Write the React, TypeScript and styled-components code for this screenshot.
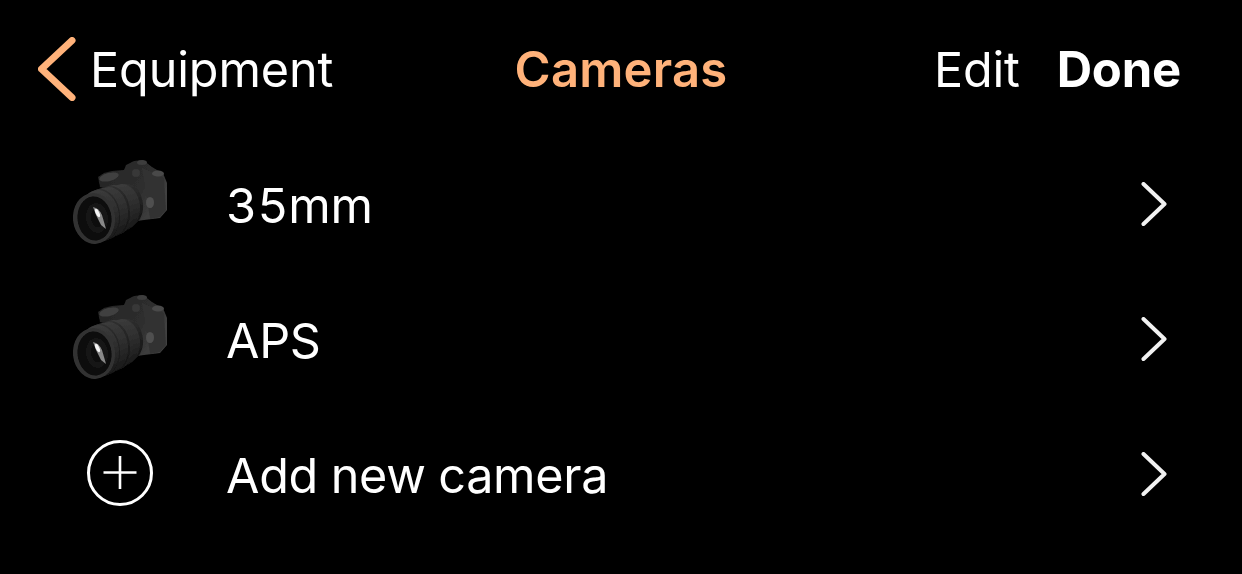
import styled, { createGlobalStyle } from "styled-components";

const GlobalStyle = createGlobalStyle`
  html, body {
    margin: 0;
    padding: 0;
    background: #000;
  }
`;

const accent = "#ffb27a";

const Screen = styled.div`
  width: 1242px;
  height: 574px;
  background: #000;
  color: #fff;
  font-family: Inter, "Liberation Sans", sans-serif;
  overflow: hidden;
`;

const NavBar = styled.header`
  height: 138px;
  display: grid;
  grid-template-columns: 1fr auto 1fr;
  align-items: center;
  padding: 0 38px;
`;

const BackLink = styled.div`
  display: flex;
  align-items: center;
  gap: 14px;
  font-size: 48.5px;
  letter-spacing: -0.1px;
`;

const Title = styled.div`
  color: ${accent};
  font-size: 49px;
  font-weight: 600;
  letter-spacing: 0.2px;
`;

const Actions = styled.div`
  display: flex;
  justify-content: flex-end;
  align-items: center;
  gap: 37px;
  padding-right: 23px;
`;

const Action = styled.span<{ $bold?: boolean }>`
  font-size: ${(p) => (p.$bold ? "49px" : "48.5px")};
  letter-spacing: -0.2px;
  font-weight: ${(p) => (p.$bold ? 700 : 400)};
`;

const List = styled.ul`
  list-style: none;
  margin: 0;
  padding: 0 75px 0 60px;
`;

const Row = styled.li`
  height: 135px;
  display: flex;
  align-items: center;
`;

const IconSlot = styled.div`
  width: 120px;
  height: 100px;
  flex: none;
  margin-bottom: 5px;
  display: flex;
  align-items: center;
  justify-content: center;
`;

const Label = styled.span`
  flex: 1;
  margin-left: 46px;
  font-size: 48.5px;
  letter-spacing: -0.3px;
  font-variant-numeric: tabular-nums;
`;

const Chevron = styled.svg`
  flex: none;
  margin-bottom: 4px;
`;

const BackChevron = () => (
  <svg width="38" height="64" viewBox="0 0 38 64" fill="none">
    <path d="M34 3.5 L3.5 32 L34 60.5" stroke={accent} strokeWidth="7" strokeLinecap="round" strokeLinejoin="round" />
  </svg>
);

const RowChevron = () => (
  <Chevron width="26" height="44" viewBox="0 0 26 44" fill="none">
    <path d="M2.5 2 L23.5 22 L2.5 42" stroke="#f2f2f2" strokeWidth="4" strokeLinecap="round" strokeLinejoin="round" />
  </Chevron>
);

const PlusCircle = () => (
  <svg width="68" height="68" viewBox="0 0 68 68" fill="none" stroke="#fff">
    <circle cx="34" cy="34" r="31.5" strokeWidth="3" />
    <path d="M34 17 V50 M17.5 33.5 H50.5" strokeWidth="2.6" />
  </svg>
);

// lens barrel drawn back to front: x, y, half width, half height, grey
const barrelBands: [number, number, number, number, string][] = [
  [68, 55, 15, 21, "url(#camBarrelDark)"],
  [63, 57, 17, 23, "url(#camBarrel)"],
  [55, 60, 18, 25, "url(#camBarrel)"],
  [52, 61, 18, 25, "url(#camBarrelDark)"],
  [50, 62, 18, 25, "url(#camBarrel)"],
  [44, 64, 19, 26, "url(#camBarrel)"],
  [41, 65, 19, 26, "url(#camBarrelDark)"],
  [39, 66, 20, 26, "url(#camBarrel)"],
];

const CameraIcon = () => (
  <svg width="120" height="100" viewBox="0 3 120 100">
    <defs>
      <linearGradient id="camBody" x1="0" y1="0" x2="1" y2="0.5">
        <stop offset="0" stopColor="#242424" />
        <stop offset="0.7" stopColor="#2e2e2e" />
        <stop offset="1" stopColor="#414141" />
      </linearGradient>
      <linearGradient id="camBarrel" x1="0.4" y1="0" x2="0.5" y2="1">
        <stop offset="0" stopColor="#3c3c3c" />
        <stop offset="0.55" stopColor="#2b2b2b" />
        <stop offset="1" stopColor="#181818" />
      </linearGradient>
      <linearGradient id="camBarrelDark" x1="0.4" y1="0" x2="0.5" y2="1">
        <stop offset="0" stopColor="#303030" />
        <stop offset="1" stopColor="#131313" />
      </linearGradient>
      <filter id="camSoft" x="-5%" y="-5%" width="110%" height="110%">
        <feGaussianBlur stdDeviation="0.7" />
      </filter>
    </defs>
    <g filter="url(#camSoft)">
      <path
        d="M38 27 L44 23 L52 21 L64 20 L66 15 L74 11 L83 10 L92 17 L97 20 L103 23 L107 33 L107 60 L100 68 L84 70 L70 72 L50 40 L40 37 Z"
        fill="url(#camBody)"
      />
      <path d="M82 18 L104 28 L106 60 L100 67 L90 69 L86 40 Z" fill="#333" />
      <ellipse cx="49" cy="27" rx="10" ry="4" fill="#414141" transform="rotate(-14 49 27)" />
      <ellipse cx="98" cy="23.500" rx="6" ry="3" fill="#4a4a4a" />
      <ellipse cx="82" cy="12.500" rx="5" ry="2.500" fill="#3c3c3c" />
      <ellipse cx="76" cy="23" rx="4" ry="4" fill="#383838" />
      <ellipse cx="90" cy="52.500" rx="4" ry="5.500" fill="#505050" />
      {barrelBands.map(([cx, cy, rx, ry, fill]) => (
        <ellipse key={cx} cx={cx} cy={cy} rx={rx} ry={ry} fill={fill} transform={`rotate(-6 ${cx} ${cy})`} />
      ))}
      <ellipse cx="34" cy="68.500" rx="21" ry="25.500" fill="#333" transform="rotate(-6 34 68.500)" />
      <ellipse cx="34.500" cy="68.500" rx="17" ry="22" fill="#0a0a0a" transform="rotate(-6 34.500 68.500)" />
      <ellipse cx="37" cy="68" rx="11" ry="15" fill="#161616" transform="rotate(-6 37 68)" />
      <ellipse cx="37" cy="68" rx="6" ry="9" fill="#0a0a0a" transform="rotate(-6 37 68)" />
      <path d="M33 57 Q39 58 42 65 L46 79 L41 75 L36 65 Z" fill="#a8a8a8" opacity="0.8" />
      <ellipse cx="37.500" cy="63" rx="1.800" ry="4.500" fill="#f4f4f4" transform="rotate(-25 37.500 63)" />
    </g>
  </svg>
);

const rows = [
  { id: "35mm", icon: <CameraIcon />, label: "35mm" },
  { id: "aps", icon: <CameraIcon />, label: "APS" },
  { id: "add", icon: <PlusCircle />, label: "Add new camera" },
];

export default function App() {
  return (
    <Screen>
      <GlobalStyle />
      <NavBar>
        <BackLink>
          <BackChevron />
          Equipment
        </BackLink>
        <Title>Cameras</Title>
        <Actions>
          <Action>Edit</Action>
          <Action $bold>Done</Action>
        </Actions>
      </NavBar>
      <List>
        {rows.map((row) => (
          <Row key={row.id}>
            <IconSlot>{row.icon}</IconSlot>
            <Label>{row.label}</Label>
            <RowChevron />
          </Row>
        ))}
      </List>
    </Screen>
  );
}
